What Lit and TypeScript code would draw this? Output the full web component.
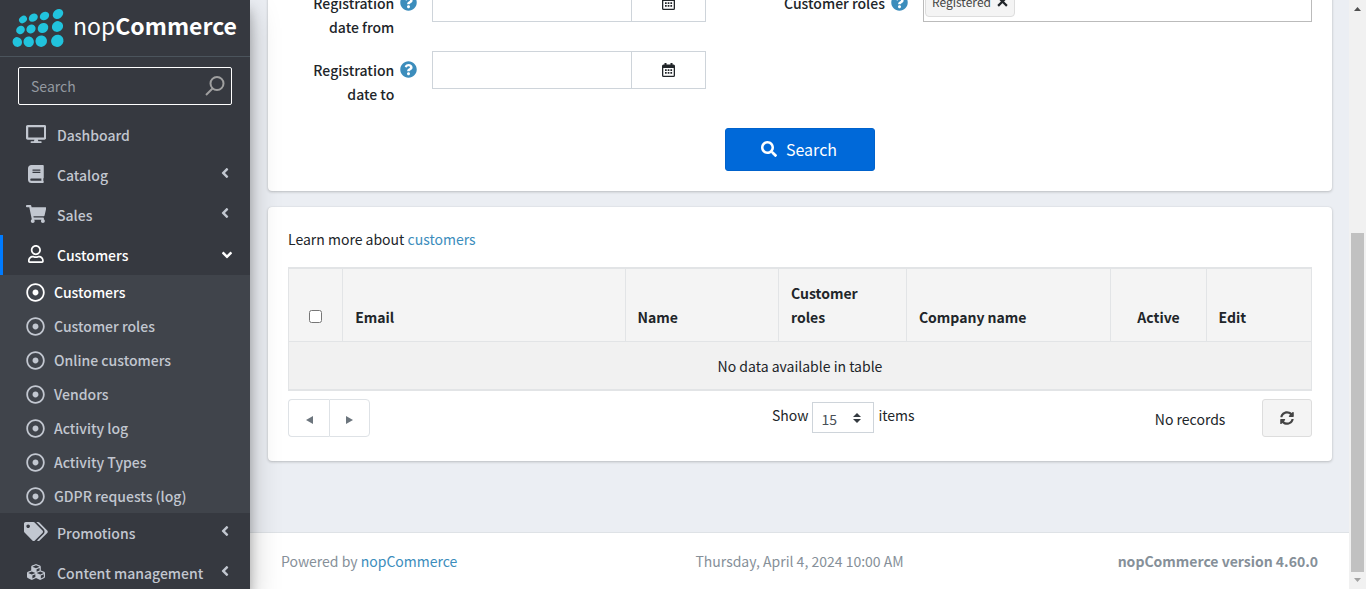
import { LitElement, html, css, svg } from "lit";
import { customElement, property } from "lit/decorators.js";
import { classMap } from "lit/directives/class-map.js";

const ICONS: Record<string, { w: number; d: string }> = {
  search: { w: 512, d: "M505 442.7L405.3 343c-4.5-4.5-10.6-7-17-7H372c27.6-35.3 44-79.7 44-128C416 93.1 322.9 0 208 0S0 93.1 0 208s93.1 208 208 208c48.3 0 92.7-16.4 128-44v16.3c0 6.4 2.5 12.5 7 17l99.7 99.7c9.4 9.4 24.6 9.4 33.9 0l28.3-28.3c9.4-9.4 9.4-24.6.1-34zM208 336c-70.7 0-128-57.2-128-128 0-70.7 57.2-128 128-128 70.7 0 128 57.2 128 128 0 70.7-57.2 128-128 128z" },
  help: { w: 512, d: "M504 256c0 136.997-111.043 248-248 248S8 392.997 8 256C8 119.083 119.043 8 256 8s248 111.083 248 248zM262.655 90c-54.497 0-89.255 22.957-116.549 63.758-3.536 5.286-2.353 12.415 2.715 16.258l34.699 26.31c5.205 3.947 12.621 3.008 16.665-2.122 17.864-22.658 30.113-35.797 57.303-35.797 20.429 0 45.698 13.148 45.698 32.958 0 14.976-12.363 22.667-32.534 33.976C247.128 238.528 216 254.941 216 296v4c0 6.627 5.373 12 12 12h56c6.627 0 12-5.373 12-12v-1.333c0-28.462 83.186-29.647 83.186-106.667 0-58.002-60.165-102-116.531-102zM256 338c-25.365 0-46 20.635-46 46 0 25.364 20.635 46 46 46s46-20.636 46-46c0-25.365-20.635-46-46-46z" },
  desktop: { w: 576, d: "M528 0H48C21.5 0 0 21.5 0 48v320c0 26.5 21.5 48 48 48h192l-16 48h-72c-13.3 0-24 10.7-24 24s10.7 24 24 24h272c13.3 0 24-10.7 24-24s-10.7-24-24-24h-72l-16-48h192c26.5 0 48-21.5 48-48V48c0-26.5-21.5-48-48-48zm-16 352H64V64h448v288z" },
  book: { w: 448, d: "M448 360V24c0-13.3-10.7-24-24-24H96C43 0 0 43 0 96v320c0 53 43 96 96 96h328c13.3 0 24-10.7 24-24v-16c0-7.5-3.5-14.3-8.9-18.7-4.2-15.4-4.2-59.3 0-74.7 5.4-4.3 8.9-11.1 8.9-18.6zM128 134c0-3.3 2.7-6 6-6h212c3.3 0 6 2.7 6 6v20c0 3.3-2.7 6-6 6H134c-3.3 0-6-2.7-6-6v-20zm0 64c0-3.3 2.7-6 6-6h212c3.3 0 6 2.7 6 6v20c0 3.3-2.7 6-6 6H134c-3.3 0-6-2.7-6-6v-20zm253.4 250H96c-17.7 0-32-14.3-32-32 0-17.6 14.4-32 32-32h285.4c-1.9 17.1-1.9 46.9 0 64z" },
  cart: { w: 576, d: "M528.12 301.319l47.273-208C578.806 78.301 567.391 64 551.99 64H159.208l-9.166-44.81C147.758 8.021 137.93 0 126.529 0H24C10.745 0 0 10.745 0 24v16c0 13.255 10.745 24 24 24h69.883l70.248 343.435C147.325 417.1 136 435.222 136 456c0 30.928 25.072 56 56 56s56-25.072 56-56c0-15.674-6.447-29.835-16.824-40h209.647C430.447 426.165 424 440.326 424 456c0 30.928 25.072 56 56 56s56-25.072 56-56c0-22.172-12.888-41.332-31.579-50.405l5.517-24.276c3.413-15.018-8.002-29.319-23.403-29.319H218.117l-6.545-32h293.145c11.206 0 20.92-7.754 23.403-18.681z" },
  user: { w: 448, d: "M313.6 304c-28.7 0-42.5 16-89.6 16-47.1 0-60.8-16-89.6-16C60.2 304 0 364.2 0 438.4V464c0 26.5 21.5 48 48 48h352c26.5 0 48-21.5 48-48v-25.6c0-74.2-60.2-134.4-134.4-134.4zM400 464H48v-25.6c0-47.6 38.8-86.4 86.4-86.4 14.6 0 38.3 16 89.6 16 51.7 0 74.9-16 89.6-16 47.6 0 86.4 38.8 86.4 86.4V464zM224 288c79.5 0 144-64.5 144-144S303.5 0 224 0 80 64.5 80 144s64.5 144 144 144zm0-240c52.9 0 96 43.1 96 96s-43.1 96-96 96-96-43.1-96-96 43.1-96 96-96z" },
  dot: { w: 512, d: "M256 56c110.532 0 200 89.451 200 200 0 110.532-89.451 200-200 200-110.532 0-200-89.451-200-200 0-110.532 89.451-200 200-200m0-48C119.033 8 8 119.033 8 256s111.033 248 248 248 248-111.033 248-248S392.967 8 256 8zm0 168c-44.183 0-80 35.817-80 80s35.817 80 80 80 80-35.817 80-80-35.817-80-80-80z" },
  tags: { w: 640, d: "M497.941 225.941L286.059 14.059A48 48 0 0 0 252.118 0H48C21.49 0 0 21.49 0 48v204.118a48 48 0 0 0 14.059 33.941l211.882 211.882c18.744 18.745 49.136 18.746 67.882 0l204.118-204.118c18.745-18.745 18.745-49.137 0-67.882zM112 160c-26.51 0-48-21.49-48-48s21.49-48 48-48 48 21.49 48 48-21.49 48-48 48zm513.941 133.823L421.823 497.941c-18.745 18.745-49.137 18.745-67.882 0l-.36-.36L527.64 323.522c16.999-16.999 26.36-39.6 26.36-63.64s-9.362-46.641-26.36-63.64L331.397 0h48.721a48 48 0 0 1 33.941 14.059l211.882 211.882c18.745 18.745 18.745 49.137 0 67.882z" },
  cubes: { w: 512, d: "M488.6 250.2L392 214V105.5c0-15-9.3-28.4-23.4-33.7l-100-37.5c-8.1-3.1-17.1-3.1-25.3 0l-100 37.5c-14.1 5.3-23.4 18.7-23.4 33.7V214l-96.6 36.2C9.3 255.5 0 268.9 0 283.9V394c0 13.6 7.7 26.1 19.9 32.2l100 50c10.1 5.1 22.1 5.1 32.2 0l103.9-52 103.9 52c10.1 5.1 22.1 5.1 32.2 0l100-50c12.2-6.1 19.9-18.6 19.9-32.2V283.9c0-15-9.3-28.4-23.4-33.7zM358 214.8l-85 31.9v-68.2l85-37v73.3zM154 104.1l102-38.2 102 38.2v.6l-102 41.4-102-41.4v-.6zm84 291.1l-85 42.5v-79.1l85-38.8v75.4zm0-112l-102 41.4-102-41.4v-.6l102-38.2 102 38.2v.6zm240 112l-85 42.5v-79.1l85-38.8v75.4zm0-112l-102 41.4-102-41.4v-.6l102-38.2 102 38.2v.6z" },
  angle: { w: 256, d: "M31.7 239l136-136c9.4-9.4 24.6-9.4 33.9 0l22.6 22.6c9.4 9.4 9.4 24.6 0 33.9L127.9 256l96.4 96.4c9.4 9.4 9.4 24.6 0 33.9L201.7 409c-9.4 9.4-24.6 9.4-33.9 0l-136-136c-9.5-9.4-9.5-24.6-.1-34z" },
  sync: { w: 512, d: "M370.72 133.28C339.458 104.008 298.888 87.962 255.848 88c-77.458.068-144.328 53.178-162.791 126.85-1.344 5.363-6.122 9.15-11.651 9.15H24.103c-7.498 0-13.194-6.807-11.807-14.176C33.933 94.924 134.813 8 256 8c66.448 0 126.791 26.136 171.315 68.685L463.03 40.97C478.149 25.851 504 36.559 504 57.941V192c0 13.255-10.745 24-24 24H345.941c-21.382 0-32.09-25.851-16.971-40.971l41.75-41.749zM32 296h134.059c21.382 0 32.09 25.851 16.971 40.971l-41.75 41.75c31.262 29.273 71.835 45.319 114.876 45.28 77.418-.07 144.315-53.144 162.787-126.849 1.344-5.363 6.122-9.15 11.651-9.15h57.304c7.498 0 13.194 6.807 11.807 14.176C478.067 417.076 377.187 504 256 504c-66.448 0-126.791-26.136-171.315-68.685L48.97 471.03C33.851 486.149 8 475.441 8 454.059V320c0-13.255 10.745-24 24-24z" },
};

const icon = (name: string, cls = "") => {
  const i = ICONS[name];
  return html`<svg class="icon ${cls}" viewBox="0 0 ${i.w} 512" aria-hidden="true"><path d=${i.d}></path></svg>`;
};

const calendar = html`<svg class="cal" viewBox="0 0 13 14" aria-hidden="true">
  <path fill-rule="evenodd" d="M2.500 0h2v1.500h4V0h2v1.500h1A1.500 1.500 0 0 1 13 3v9.500a1.500 1.500 0 0 1-1.500 1.500h-10A1.500 1.500 0 0 1 0 12.500V3a1.500 1.500 0 0 1 1.500-1.500h1zM1.300 5v7.700h10.400V5z"></path>
  <path d="M3 6.300h1.700v1.700H3zm2.700 0h1.700v1.700H5.700zm2.700 0h1.700v1.700H8.400zM3 9h1.700v1.700H3zm2.700 0h1.700v1.700H5.700zm2.700 0h1.700v1.700H8.400z"></path>
</svg>`;

/* Logo dots: centre x, centre y, x radius, y radius */
const DOTS = [
  [23, 19.5, 4.2, 3.4], [33.300, 17.700, 4.800, 3.800], [44.500, 16, 5, 4], [58, 14, 5.600, 4.500],
  [20.500, 30, 4.500, 4], [31, 29, 4.800, 4.200], [43, 28, 5.500, 4.800], [57.500, 26.500, 5.800, 5.200],
  [17.300, 42, 4.600, 5], [28.700, 41.800, 5.200, 5.300], [41.200, 41.200, 5.800, 5.700], [57.300, 40.800, 6.400, 6],
];

const MENU = [
  { label: "Dashboard", icon: "desktop" },
  { label: "Catalog", icon: "book", tree: true },
  { label: "Sales", icon: "cart", tree: true },
  {
    label: "Customers", icon: "user", tree: true,
    children: ["Customers", "Customer roles", "Online customers", "Vendors", "Activity log", "Activity Types", "GDPR requests (log)"],
  },
  { label: "Promotions", icon: "tags", tree: true },
  { label: "Content management", icon: "cubes", tree: true },
];

const reset = css`
  * { box-sizing: border-box; }
  a { text-decoration: none; }
  button, input, select { font: inherit; color: inherit; }
  .icon { display: block; height: 16px; width: auto; fill: currentColor; flex: none; }
`;

@customElement("side-nav")
class SideNav extends LitElement {
  static styles = [reset, css`
    :host {
      display: block; position: relative; z-index: 2; background: #363940; color: #c2c7d0;
      box-shadow: 0 14px 28px rgba(0, 0, 0, .25), 0 10px 10px rgba(0, 0, 0, .22);
      font-weight: 500;
    }
    .brand { display: flex; align-items: center; height: 57px; border-bottom: 1px solid #4b545c; }
    .dots { display: block; width: 73px; height: 56px; fill: #21c3dd; }
    .name { color: #fff; font-size: 23px; line-height: 32px; font-weight: 400; padding-bottom: 6px; }
    .name b { font-weight: 700; }
    .find { display: flex; align-items: center; margin: 10px 18px; height: 38px; border: 1px solid #fff; border-radius: 2px; padding: 0 6px 0 12px; }
    .find input { flex: 1; min-width: 0; border: 0; background: none; outline: 0; padding: 0; font-weight: 400; }
    .find input::placeholder { color: #949aa0; opacity: 1; }
    .find svg { width: 20px; height: 20px; fill: none; stroke: #a0a0a0; stroke-width: 2; }
    ul { list-style: none; margin: 0; padding: 0; }
    .item { display: flex; align-items: center; height: 40px; padding: 0 18px 0 22px; border-left: 3px solid transparent; color: inherit; }
    .item .slot { width: 22px; display: flex; justify-content: center; margin-right: 10px; padding-bottom: 3px; }
    .item .icon { height: 18px; }
    .item .tags { height: 19px; }
    .item .text { flex: 1; }
    .item .arrow { height: 16px; margin: 0 3px 5px 0; }
    .open { border-color: #007bff; color: #fff; }
    .open .arrow { transform: rotate(-90deg); margin: 0 1px 0 0; }
    .sub { background: #40444b; }
    .sub a { display: flex; align-items: center; gap: 9px; height: 34px; padding-left: 26px; color: inherit; }
    .sub .icon { height: 19px; }
    .sub .current { color: #fff; }
  `];

  render() {
    return html`
      <div class="brand">
        <svg class="dots" viewBox="0 0 73 56" aria-hidden="true">
          ${DOTS.map(([x, y, rx, ry]) => svg`<ellipse cx=${x} cy=${y} rx=${rx} ry=${ry} transform="rotate(-35 ${x} ${y})"></ellipse>`)}
        </svg>
        <span class="name">nop<b>Commerce</b></span>
      </div>
      <div class="find">
        <input type="text" placeholder="Search" aria-label="Search" />
        <svg viewBox="0 0 20 20" aria-hidden="true"><circle cx="12" cy="7.500" r="6.500"></circle><path d="M7.500 12.500L1 19"></path></svg>
      </div>
      <ul>
        ${MENU.map((m) => html`<li>
          <a href="#" class=${classMap({ item: true, open: !!m.children })}>
            <span class="slot">${icon(m.icon, m.icon)}</span>
            <span class="text">${m.label}</span>
            ${m.tree ? icon("angle", "arrow") : null}
          </a>
          ${m.children ? html`<ul class="sub">
            ${m.children.map((c, i) => html`<li><a href="#" class=${classMap({ current: i === 0 })}>${icon("dot")}${c}</a></li>`)}
          </ul>` : null}
        </li>`)}
      </ul>`;
  }
}

@customElement("form-row")
class FormRow extends LitElement {
  @property() label = "";
  @property({ type: Boolean }) date = false;
  static styles = [reset, css`
    :host { display: grid; grid-template-columns: repeat(12, minmax(0, 1fr)); column-gap: 15px; align-items: start; }
    .label { grid-column: span 4; display: flex; justify-content: flex-end; gap: 6px; padding: 7px 0 1px; text-align: right; font-weight: 500; }
    .help { color: #3c8dbc; height: 17px; margin-top: 3px; }
    .field { grid-column: span 8; display: flex; height: 38px; }
    .field input { flex: 1; min-width: 0; border: 1px solid #ced4da; border-right: 0; padding: 0 12px; background: #fff; }
    .pick { width: 75px; border: 1px solid #ced4da; background: #fff; display: flex; align-items: center; justify-content: center; padding: 0; }
    .cal { width: 13px; height: 14px; fill: #212529; }
    .roles { border: 1px solid #bbb; padding: 3px 1px; }
    .tag { display: flex; align-items: center; gap: 6px; height: 29px; padding: 0 6px 2px; background: #f4f4f4; border: 1px solid #ddd; border-radius: 4px; color: #444; font-size: 12px; }
    .tag button { border: 0; background: none; padding: 0; display: flex; color: #212529; }
    .tag svg { width: 11px; height: 11px; stroke: currentColor; stroke-width: 2; }
  `];

  render() {
    return html`
      <label class="label" for=${this.date ? "field" : "remove"}><span>${this.label}</span>${icon("help", "help")}</label>
      ${this.date
        ? html`<div class="field"><input id="field" type="text" /><button class="pick" aria-label="Pick a date">${calendar}</button></div>`
        : html`<div class="field roles"><span class="tag">Registered<button id="remove" aria-label="Remove"><svg viewBox="0 0 10 10"><path d="M1 1l8 8M9 1l-8 8"></path></svg></button></span></div>`}`;
  }
}

@customElement("customer-grid")
class CustomerGrid extends LitElement {
  static styles = [reset, css`
    :host { display: block; }
    a { color: #3c8dbc; }
    .more { margin: 0 0 16px; }
    table { width: 100%; border-collapse: collapse; table-layout: fixed; background: #f4f4f4; }
    th, td { border: 1px solid #e2e4e6; padding: 12px; }
    th { text-align: left; vertical-align: bottom; font-weight: 700; border-top-width: 2px; }
    td { text-align: center; background: #f1f1f1; border-bottom-width: 2px; padding-bottom: 11px; }
    .mid { text-align: center; }
    .c-check { width: 5.300%; } .c-email { width: 27.600%; } .c-name { width: 15%; } .c-roles { width: 12.500%; }
    .c-company { width: 20%; } .c-active { width: 9.300%; }
    .check { display: block; width: 13px; height: 13px; margin: 0 auto 6px; }
    .foot { display: grid; grid-template-columns: repeat(12, minmax(0, 1fr)); column-gap: 15px; padding-top: 8px; }
    .pager { grid-column: span 5; display: flex; }
    .pager button { width: 41px; height: 38px; border: 1px solid #dee2e6; background: #fff; display: flex; align-items: center; justify-content: center; padding: 4px 0 0; }
    .pager button:first-child { border-radius: 4px 0 0 4px; border-right: 0; }
    .pager button:last-child { border-radius: 0 4px 4px 0; }
    .pager svg { width: 7px; height: 8px; fill: #6c757d; }
    .length { grid-column: span 3; display: flex; justify-content: center; gap: 4px; padding-top: 3px; }
    .length span { line-height: 26px; }
    .box { display: flex; align-items: center; width: 62px; height: 31px; border: 1px solid #ced4da; padding-right: 12px; }
    .box select { flex: 1; min-width: 0; appearance: none; border: 0; background: none; padding: 3px 0 0 8px; outline: 0; color: #495057; }
    .box svg { width: 8px; height: 10px; fill: #343a40; }
    .info { grid-column: span 3; text-align: right; padding-top: 8px; }
    .tools { display: flex; justify-content: flex-end; }
    .tools button { width: 50px; height: 38px; background: #f4f4f4; border: 1px solid #ddd; border-radius: 3px; color: #444; display: flex; align-items: center; justify-content: center; padding: 0; }
    .tools .icon { height: 14px; }
  `];

  render() {
    return html`
      <p class="more">Learn more about <a href="#">customers</a></p>
      <table>
        <colgroup><col class="c-check" /><col class="c-email" /><col class="c-name" /><col class="c-roles" /><col class="c-company" /><col class="c-active" /><col /></colgroup>
        <thead><tr>
          <th><input class="check" type="checkbox" aria-label="Select all" /></th>
          <th>Email</th><th>Name</th><th>Customer roles</th><th>Company name</th><th class="mid">Active</th><th>Edit</th>
        </tr></thead>
        <tbody><tr><td colspan="7">No data available in table</td></tr></tbody>
      </table>
      <div class="foot">
        <div class="pager">
          <button aria-label="Previous"><svg viewBox="0 0 7 8"><path d="M7 0v8L0 4z"></path></svg></button>
          <button aria-label="Next"><svg viewBox="0 0 7 8"><path d="M0 0v8l7-4z"></path></svg></button>
        </div>
        <label class="length"><span>Show</span>
          <span class="box"><select><option>15</option><option>20</option><option>50</option></select><svg viewBox="0 0 8 10" aria-hidden="true"><path d="M4 0l4 4H0zM0 6h8l-4 4z"></path></svg></span>
          <span>items</span></label>
        <div class="info">No records</div>
        <div class="tools"><button aria-label="Refresh">${icon("sync")}</button></div>
      </div>`;
  }
}

@customElement("app-root")
class AppRoot extends LitElement {
  static styles = [reset, css`
    :host {
      display: grid; grid-template-columns: 250px minmax(0, 1fr) 17px; height: 100vh; overflow: hidden;
      font: 400 14px/24px "Noto Sans CJK SC", "Source Sans Pro", sans-serif; color: #212529; background: #ebeef3;
    }
    side-nav { min-height: 0; }
    /* The pane rests at the end of its scroll range */
    main { display: flex; flex-direction: column; justify-content: flex-end; min-height: 0; overflow: hidden; }
    .card { flex: none; margin: 0 17px 16px 18px; background: #fff; border-radius: 4px; padding: 20px; box-shadow: 0 0 1px rgba(0, 0, 0, .125), 0 1px 3px rgba(0, 0, 0, .2); }
    .filters { display: grid; grid-template-columns: repeat(12, minmax(0, 1fr)); column-gap: 15px; padding-bottom: 21px; }
    .left { grid-column: span 5; display: grid; gap: 11px; }
    .right { grid-column: span 7; }
    .go { display: flex; align-items: center; justify-content: center; gap: 9px; width: 150px; height: 43px; margin: 0 auto; padding: 0 2px 2px 0; border: 1px solid #0062cc; border-radius: 3px; background: #0069d9; color: #fff; font-size: 16px; }
    .result { padding-bottom: 24px; margin-bottom: 71px; }
    footer { flex: none; display: grid; grid-template-columns: 1fr auto 1fr; padding: 16px 31px; border-top: 1px solid #dee2e6; background: #fff; color: #869099; }
    footer a { color: #3c8dbc; }
    footer strong { text-align: right; font-weight: 700; }
    .bar { display: flex; flex-direction: column; align-items: center; justify-content: space-between; background: #f1f1f1; padding: 7px 2px; }
    .bar svg { width: 7px; height: 4px; fill: #505050; }
    .bar .end { fill: #a3a3a3; }
    .track { flex: 1; width: 100%; margin: 6px 0; display: flex; align-items: flex-end; }
    .thumb { width: 13px; height: 61%; background: #c1c1c1; }
  `];

  render() {
    return html`
      <side-nav></side-nav>
      <main>
        <section class="card">
          <div class="filters">
            <div class="left">
              <form-row label="Registration date from" date></form-row>
              <form-row label="Registration date to" date></form-row>
            </div>
            <form-row class="right" label="Customer roles"></form-row>
          </div>
          <button class="go">${icon("search")}Search</button>
        </section>
        <section class="card result"><customer-grid></customer-grid></section>
        <footer>
          <span>Powered by <a href="#">nopCommerce</a></span>
          <span>Thursday, April 4, 2024 10:00 AM</span>
          <strong>nopCommerce version 4.60.0</strong>
        </footer>
      </main>
      <div class="bar" aria-hidden="true">
        <svg viewBox="0 0 7 4"><path d="M0 4l3.500-4L7 4z"></path></svg>
        <div class="track"><div class="thumb"></div></div>
        <svg class="end" viewBox="0 0 7 4"><path d="M0 0h7L3.500 4z"></path></svg>
      </div>`;
  }
}
